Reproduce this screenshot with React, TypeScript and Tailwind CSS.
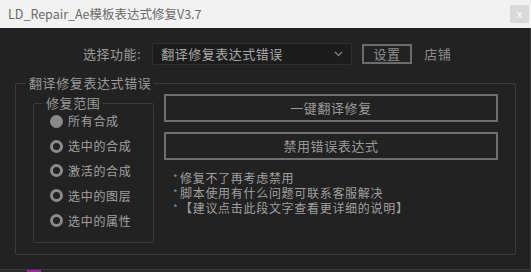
import React, { useState } from 'react';

const FONT = { fontFamily: '"Noto Sans CJK SC", "Noto Sans", sans-serif' };

const scopes = ['所有合成', '选中的合成', '激活的合成', '选中的图层', '选中的属性'];

const notes = [
  '修复不了再考虑禁用',
  '脚本使用有什么问题可联系客服解决',
  '【建议点击此段文字查看更详细的说明】',
];

export default function App() {
  const [scope, setScope] = useState(0);

  return (
    <div className="w-[531px] h-[272px] overflow-hidden bg-[#222222] flex flex-col" style={FONT}>
      {/* Title bar */}
      <div className="h-[28px] bg-[#f2f2f2] flex items-center justify-between pl-[8px] pr-[2px] shrink-0">
        <span className="text-[12.5px] text-[#6a6a6a] leading-none">LD_Repair_Ae模板表达式修复V3.7</span>
        <div className="w-[19px] h-[18px] bg-[#d9d9d9] flex items-center justify-center text-[10px] font-bold text-[#f4f4f4] leading-none">
          x
        </div>
      </div>

      {/* Body */}
      <div className="flex-1 flex flex-col border-r border-[#3a3a3a] border-b">
        {/* Function row */}
        <div className="flex items-center h-[22px] mt-[15px] pl-[83px] text-[13px] text-[#9a9a9a] tracking-[0.5px]">
          <span>选择功能:</span>
          <div className="ml-[11px] w-[200px] h-[22px] bg-[#1c1c1c] border border-[#2f2f2f] rounded-[2px] flex items-center justify-between pl-[8px] pr-[8px] text-[#a8a8a8]">
            <span>翻译修复表达式错误</span>
            <svg width="9" height="6" viewBox="0 0 9 6" fill="none">
              <path d="M1 1 L4.5 4.5 L8 1" stroke="#8a8a8a" strokeWidth="1.2" />
            </svg>
          </div>
          <div className="ml-[10px] w-[50px] h-[20px] border-2 border-[#6c6c6c] flex items-center justify-center text-[#8e8e8e]">
            设置
          </div>
          <span className="ml-[12px] text-[#8e8e8e]">店铺</span>
        </div>

        {/* Outer group */}
        <div className="relative ml-[15px] mt-[18px] w-[501px] h-[172px] border border-[#3a3a3a] rounded-[2px] flex">
          <span className="absolute left-[10px] top-[-9px] px-[3px] bg-[#222222] text-[13px] leading-[16px] text-[#9a9a9a] tracking-[0.6px]">
            翻译修复表达式错误
          </span>

          {/* Inner group: scope */}
          <div className="relative ml-[17px] mt-[19px] w-[121px] h-[140px] border border-[#3a3a3a] rounded-[2px] flex flex-col pt-[5px] pl-[16px]">
            <span className="absolute left-[9px] top-[-9px] px-[3px] bg-[#222222] text-[13px] leading-[16px] text-[#9a9a9a] tracking-[0.6px]">
              修复范围
            </span>
            {scopes.map((s, i) => (
              <button
                key={s}
                onClick={() => setScope(i)}
                className="flex items-center h-[24.8px] text-[12px] text-[#a0a0a0] tracking-[0.7px]"
              >
                {scope === i ? (
                  <span className="w-[13px] h-[13px] rounded-full bg-[#8a8a8a] shrink-0" />
                ) : (
                  <span className="w-[13px] h-[13px] rounded-full border-[3px] border-[#8a8a8a] shrink-0" />
                )}
                <span className="ml-[5px]">{s}</span>
              </button>
            ))}
          </div>

          {/* Right column */}
          <div className="ml-[10px] mt-[10px] flex flex-col">
            <button className="w-[334px] h-[28px] border-2 border-[#6e6e6e] flex items-center justify-center text-[13px] text-[#9a9a9a] tracking-[0.6px]">
              一键翻译修复
            </button>
            <button className="mt-[10px] w-[334px] h-[28px] border-2 border-[#6e6e6e] flex items-center justify-center text-[13px] text-[#9a9a9a] tracking-[0.6px]">
              禁用错误表达式
            </button>
            <div className="mt-[10px] ml-[9px] flex flex-col text-[12px] text-[#a0a0a0] tracking-[0.7px]">
              {notes.map((n) => (
                <div key={n} className="flex items-center h-[15px] leading-[15px]">
                  <span className="text-[#7f8fa0] text-[10px] leading-[15px] w-[7px]">*</span>
                  <span className="leading-[15px]">{n}</span>
                </div>
              ))}
            </div>
          </div>
        </div>
        <div className="flex-1" />
      </div>
      {/* strip of the app behind */}
      <div className="h-[2px] bg-[#2a2a2a] flex shrink-0">
        <div className="ml-[27px] w-[14px] bg-[#9a2aa0]" />
      </div>
    </div>
  );
}
